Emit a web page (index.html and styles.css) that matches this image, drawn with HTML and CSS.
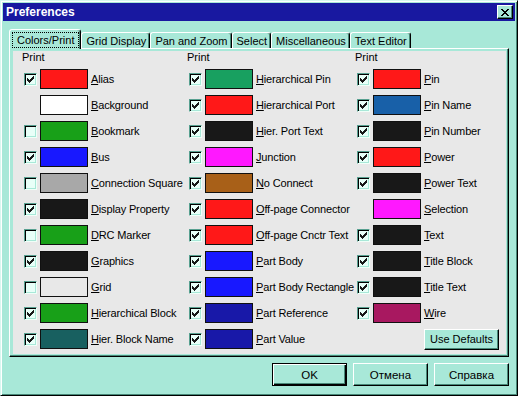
FILE: index.html
```html
<!DOCTYPE html>
<html>
<head>
<meta charset="utf-8">
<title>Preferences</title>
<link rel="stylesheet" href="styles.css">
</head>
<body>
<svg class="defs" width="0" height="0" aria-hidden="true">
  <defs>
    <symbol id="chk" viewBox="0 0 7 7">
      <rect x="0" y="2" width="1" height="3"/><rect x="1" y="3" width="1" height="3"/><rect x="2" y="4" width="1" height="3"/><rect x="3" y="3" width="1" height="3"/><rect x="4" y="2" width="1" height="3"/><rect x="5" y="1" width="1" height="3"/><rect x="6" y="0" width="1" height="3"/>
    </symbol>
  </defs>
</svg>
<div class="window">
  <div class="titlebar">
    <span class="title">Preferences</span>
    <button class="close" aria-label="Close">
      <svg viewBox="0 0 8 7" width="8" height="7" shape-rendering="crispEdges"><g fill="#000"><rect x="0" y="0" width="2" height="1"/><rect x="6" y="0" width="2" height="1"/><rect x="1" y="1" width="2" height="1"/><rect x="5" y="1" width="2" height="1"/><rect x="2" y="2" width="4" height="1"/><rect x="3" y="3" width="2" height="1"/><rect x="2" y="4" width="4" height="1"/><rect x="1" y="5" width="2" height="1"/><rect x="5" y="5" width="2" height="1"/><rect x="0" y="6" width="2" height="1"/><rect x="6" y="6" width="2" height="1"/></g></svg>
    </button>
  </div>
  <div class="content">
    <div class="tabs">
      <div class="tab active"><span class="focus">Colors/Print</span></div>
      <div class="tab">Grid Display</div>
      <div class="tab">Pan and Zoom</div>
      <div class="tab">Select</div>
      <div class="tab">Miscellaneous</div>
      <div class="tab">Text Editor</div>
    </div>
    <div class="panel">
      <div class="page">
        <div class="col">
          <div class="hdr">Print</div>
          <div class="row"><span class="cb on"><svg><use href="#chk"/></svg></span><span class="sw red"></span><span class="lbl"><u>A</u>lias</span></div>
          <div class="row"><span class="cb none"></span><span class="sw white"></span><span class="lbl"><u>B</u>ackground</span></div>
          <div class="row"><span class="cb"></span><span class="sw green"></span><span class="lbl"><u>B</u>ookmark</span></div>
          <div class="row"><span class="cb on"><svg><use href="#chk"/></svg></span><span class="sw blue"></span><span class="lbl"><u>B</u>us</span></div>
          <div class="row"><span class="cb"></span><span class="sw grey"></span><span class="lbl"><u>C</u>onnection Square</span></div>
          <div class="row"><span class="cb on"><svg><use href="#chk"/></svg></span><span class="sw black"></span><span class="lbl"><u>D</u>isplay Property</span></div>
          <div class="row"><span class="cb"></span><span class="sw green"></span><span class="lbl"><u>D</u>RC Marker</span></div>
          <div class="row"><span class="cb on"><svg><use href="#chk"/></svg></span><span class="sw black"></span><span class="lbl"><u>G</u>raphics</span></div>
          <div class="row"><span class="cb"></span><span class="sw light"></span><span class="lbl"><u>G</u>rid</span></div>
          <div class="row"><span class="cb on"><svg><use href="#chk"/></svg></span><span class="sw green"></span><span class="lbl"><u>H</u>ierarchical Block</span></div>
          <div class="row"><span class="cb on"><svg><use href="#chk"/></svg></span><span class="sw teal"></span><span class="lbl"><u>H</u>ier. Block Name</span></div>
        </div>
        <div class="col">
          <div class="hdr">Print</div>
          <div class="row"><span class="cb on"><svg><use href="#chk"/></svg></span><span class="sw jade"></span><span class="lbl"><u>H</u>ierarchical Pin</span></div>
          <div class="row"><span class="cb on"><svg><use href="#chk"/></svg></span><span class="sw red"></span><span class="lbl"><u>H</u>ierarchical Port</span></div>
          <div class="row"><span class="cb on"><svg><use href="#chk"/></svg></span><span class="sw black"></span><span class="lbl"><u>H</u>ier. Port Text</span></div>
          <div class="row"><span class="cb on"><svg><use href="#chk"/></svg></span><span class="sw magenta"></span><span class="lbl"><u>J</u>unction</span></div>
          <div class="row"><span class="cb on"><svg><use href="#chk"/></svg></span><span class="sw brown"></span><span class="lbl"><u>N</u>o Connect</span></div>
          <div class="row"><span class="cb on"><svg><use href="#chk"/></svg></span><span class="sw red"></span><span class="lbl"><u>O</u>ff-page Connector</span></div>
          <div class="row"><span class="cb on"><svg><use href="#chk"/></svg></span><span class="sw red"></span><span class="lbl"><u>O</u>ff-page Cnctr Text</span></div>
          <div class="row"><span class="cb on"><svg><use href="#chk"/></svg></span><span class="sw blue"></span><span class="lbl"><u>P</u>art Body</span></div>
          <div class="row"><span class="cb on"><svg><use href="#chk"/></svg></span><span class="sw blue"></span><span class="lbl"><u>P</u>art Body Rectangle</span></div>
          <div class="row"><span class="cb on"><svg><use href="#chk"/></svg></span><span class="sw navy"></span><span class="lbl"><u>P</u>art Reference</span></div>
          <div class="row"><span class="cb on"><svg><use href="#chk"/></svg></span><span class="sw navy"></span><span class="lbl"><u>P</u>art Value</span></div>
        </div>
        <div class="col">
          <div class="hdr">Print</div>
          <div class="row"><span class="cb on"><svg><use href="#chk"/></svg></span><span class="sw red"></span><span class="lbl"><u>P</u>in</span></div>
          <div class="row"><span class="cb on"><svg><use href="#chk"/></svg></span><span class="sw steel"></span><span class="lbl"><u>P</u>in Name</span></div>
          <div class="row"><span class="cb on"><svg><use href="#chk"/></svg></span><span class="sw black"></span><span class="lbl"><u>P</u>in Number</span></div>
          <div class="row"><span class="cb on"><svg><use href="#chk"/></svg></span><span class="sw red"></span><span class="lbl"><u>P</u>ower</span></div>
          <div class="row"><span class="cb on"><svg><use href="#chk"/></svg></span><span class="sw black"></span><span class="lbl"><u>P</u>ower Text</span></div>
          <div class="row"><span class="cb none"></span><span class="sw magenta"></span><span class="lbl"><u>S</u>election</span></div>
          <div class="row"><span class="cb on"><svg><use href="#chk"/></svg></span><span class="sw black"></span><span class="lbl"><u>T</u>ext</span></div>
          <div class="row"><span class="cb on"><svg><use href="#chk"/></svg></span><span class="sw black"></span><span class="lbl"><u>T</u>itle Block</span></div>
          <div class="row"><span class="cb on"><svg><use href="#chk"/></svg></span><span class="sw black"></span><span class="lbl"><u>T</u>itle Text</span></div>
          <div class="row"><span class="cb on"><svg><use href="#chk"/></svg></span><span class="sw wine"></span><span class="lbl"><u>W</u>ire</span></div>
          <div class="row"><button class="btn small">Use Defaults</button></div>
        </div>
      </div>
    </div>
    <div class="buttons">
      <button class="btn default">OK</button>
      <button class="btn">Отмена</button>
      <button class="btn">Справка</button>
    </div>
  </div>
</div>
</body>
</html>
```
FILE: styles.css
```css
* { box-sizing: border-box; }
html, body { margin: 0; padding: 0; }
body {
  width: 518px;
  height: 396px;
  overflow: hidden;
  background: #a8e8d8;
  font: 11px "Liberation Sans", Arial, sans-serif;
  color: #000;
}
.defs { position: absolute; width: 0; height: 0; }
.window {
  width: 518px;
  height: 396px;
  border: 1px solid;
  border-color: #d8f8f0 #000 #000 #d8f8f0;
  box-shadow: inset 1px 1px #fff, inset -1px -1px #488878;
  padding: 2px;
  display: flex;
  flex-direction: column;
}
.titlebar {
  height: 18px;
  flex: none;
  background: #1818a0;
  display: flex;
  align-items: center;
  justify-content: space-between;
  padding: 0 2px 0 3px;
}
.title { color: #fff; font-weight: bold; font-size: 12px; }
.close {
  width: 16px;
  height: 14px;
  padding: 0;
  background: #a8e8d8;
  border: 1px solid;
  border-color: #fff #000 #000 #fff;
  box-shadow: inset -1px -1px #488878;
  display: flex;
  align-items: center;
  justify-content: center;
}
.close svg { display: block; }
.content {
  flex: 1;
  padding: 8px 6px 0;
  display: flex;
  flex-direction: column;
}
.tabs {
  height: 19px;
  display: flex;
  align-items: flex-end;
  padding-left: 2px;
  position: relative;
  z-index: 1;
}
.tab {
  height: 16px;
  padding: 0 3px 0 4px;
  border: 1px solid;
  border-bottom: 0;
  border-color: #fff #000 transparent #fff;
  border-radius: 3px 3px 0 0;
  box-shadow: inset -1px 0 #488878;
  background: #a8e8d8;
  display: flex;
  align-items: center;
  white-space: nowrap;
}
.tab.active {
  height: 20px;
  margin: 0 0 -1px -2px;
  padding: 2px 1px 1px 2px;
  align-items: stretch;
  position: relative;
  z-index: 2;
}
.focus {
  border: 1px dotted #000;
  padding: 0 4px;
  display: flex;
  align-items: center;
}
.panel {
  height: 309px;
  flex: none;
  border: 1px solid;
  border-color: #fff #000 #000 #fff;
  box-shadow: inset -1px -1px #488878;
  padding: 2px 2px 2px 3px;
  background: #a8e8d8;
}
.page {
  height: 100%;
  background: #e8e8e8;
  display: grid;
  grid-template-columns: 165px 168px 1fr;
  padding-left: 11px;
}
.col { display: flex; flex-direction: column; }
.hdr { height: 15px; line-height: 13px; margin-left: -2px; }
.row { height: 26px; display: flex; align-items: center; white-space: nowrap; }
.lbl { letter-spacing: -0.15px; }
.cb {
  width: 13px;
  height: 13px;
  flex: none;
  margin-right: 3px;
  padding: 2px 0 0 2px;
  border: 1px solid;
  border-color: #58a090 #f0fff8 #f0fff8 #58a090;
  box-shadow: inset 1px 1px #000, inset -1px -1px #a8e8d8;
  background: #e8fff8;
}
.cb svg { display: block; width: 7px; height: 7px; fill: #181818; }
.cb.none { visibility: hidden; }
.sw {
  width: 48px;
  height: 20px;
  flex: none;
  margin-right: 3px;
  border: 1px solid #101010;
}
.red { background: #ff1818; }
.white { background: #ffffff; }
.green { background: #18a018; }
.blue { background: #1818ff; }
.grey { background: #a8a8a8; }
.black { background: #181818; }
.light { background: #e8e8e8; }
.teal { background: #186060; }
.jade { background: #18a060; }
.magenta { background: #ff18ff; }
.brown { background: #a86018; }
.navy { background: #1818a8; }
.steel { background: #1860a8; }
.wine { background: #a81860; }
u { text-decoration: underline; text-underline-offset: 1px; }
.btn {
  width: 75px;
  height: 23px;
  padding: 0;
  font: 11.5px "Liberation Sans", Arial, sans-serif;
  color: #000;
  background: #a8e8d8;
  border: 1px solid;
  border-color: #fff #000 #000 #fff;
  box-shadow: inset -1px -1px #488878;
  display: flex;
  align-items: center;
  justify-content: center;
}
.btn.default {
  border-color: #000;
  box-shadow: inset 1px 1px #fff, inset -1px -1px #000, inset -2px -2px #488878;
}
.btn.small { height: 21px; margin-left: 67px; font-size: 11px; }
.buttons {
  display: flex;
  justify-content: flex-end;
  gap: 6px;
  margin-top: 6px;
}
```
